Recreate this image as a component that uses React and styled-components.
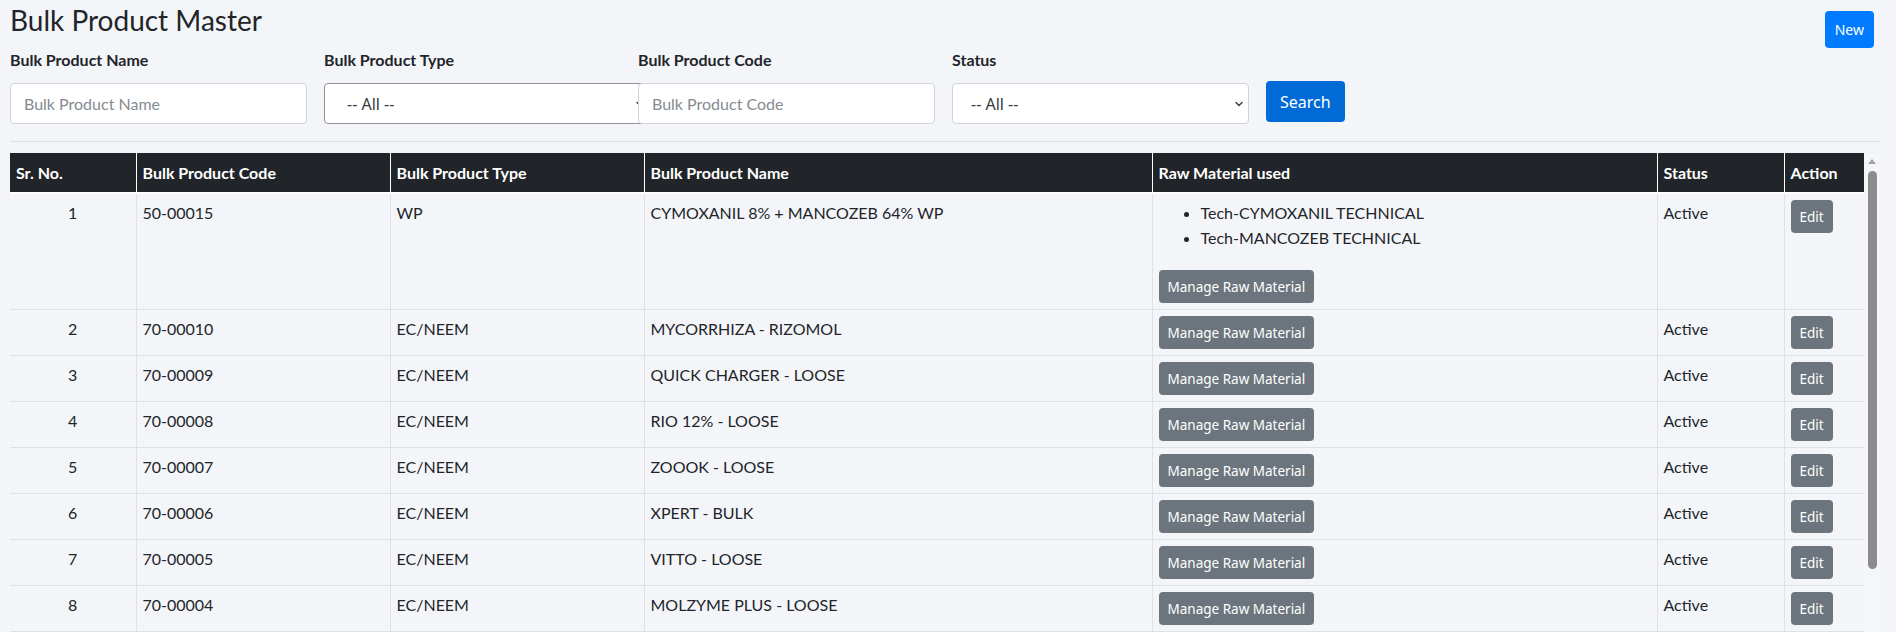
import React from "react";
import styled, { createGlobalStyle } from "styled-components";
import { ChevronDown } from "lucide-react";

const GlobalStyle = createGlobalStyle`
  * { box-sizing: border-box; }
  html, body {
    margin: 0;
    padding: 0;
    background: #f4f5f9;
  }
  body {
    font-family: Lato, "Liberation Sans", sans-serif;
    font-size: 16px;
    color: #212529;
  }
`;

const Page = styled.div`
  height: 100vh;
  display: flex;
  flex-direction: column;
  padding: 0 16px 0 10px;
  overflow: hidden;
`;

const TopBar = styled.div`
  display: flex;
  justify-content: space-between;
  align-items: flex-start;
  height: 48px;
`;

const Title = styled.h3`
  margin: 3px 0 0;
  font-size: 28px;
  line-height: 34px;
  font-weight: 400;
`;

const Button = styled.button`
  border: none;
  border-radius: 4px;
  color: #fff;
  font-family: "Noto Sans", "Open Sans", sans-serif;
  cursor: pointer;
  background: ${(p) => p.$bg || "#6c757d"};
  font-size: ${(p) => p.$size || "13.5px"};
  height: ${(p) => p.$h || "33px"};
  padding: 0 ${(p) => p.$px || "9px"};
  white-space: nowrap;
`;

const NewButton = styled(Button)`
  margin: 11px 6px 0 0;
`;

const Filters = styled.div`
  display: flex;
  align-items: flex-end;
  gap: 17px;
  padding-bottom: 17px;
`;

const Field = styled.div`
  width: 297px;
  display: flex;
  flex-direction: column;
`;

const Label = styled.label`
  font-weight: 700;
  font-size: 16px;
  line-height: 24px;
  margin-bottom: 11px;
`;

const Input = styled.input`
  position: relative;
  z-index: 1;
  height: 41px;
  width: 100%;
  border: 1px solid #ced4da;
  border-radius: 4px;
  background: #fff;
  padding: 0 13px;
  font-family: Lato, sans-serif;
  font-size: 16px;
  color: #495057;
  &::placeholder {
    color: #848b92;
  }
`;

const SelectWrap = styled.div`
  position: relative;
  width: ${(p) => (p.$wide ? "326px" : "100%")};
`;

const Select = styled.select`
  appearance: none;
  width: 100%;
  height: 41px;
  border: 1px solid ${(p) => (p.$dark ? "#8f9296" : "#ced4da")};
  border-radius: 4px;
  background: #fff;
  padding: 0 30px 0 ${(p) => (p.$dark ? "22px" : "18px")};
  font-family: "Noto Sans", "Open Sans", sans-serif;
  font-size: 16px;
  color: #343a40;
`;

const Chevron = styled(ChevronDown)`
  position: absolute;
  right: 4px;
  top: 15px;
  color: #444;
  pointer-events: none;
`;

const SearchButton = styled(Button)`
  margin-bottom: 2px;
`;

const Divider = styled.div`
  height: 1px;
  background: #dcdfe4;
  margin-bottom: 11px;
`;

const TableArea = styled.div`
  flex: 1;
  min-height: 0;
  display: flex;
`;

const TableClip = styled.div`
  flex: 1;
  min-width: 0;
  overflow: hidden;
`;

const Rail = styled.div`
  width: 16px;
  flex: none;
  background: #f5f6f9;
  display: flex;
  flex-direction: column;
  align-items: center;
`;

const RailArrow = styled.div`
  height: 16px;
  width: 100%;
  display: flex;
  align-items: center;
  justify-content: center;
  &::before {
    content: "";
    width: 0;
    height: 0;
    border-left: 4.5px solid transparent;
    border-right: 4.5px solid transparent;
    border-bottom: 5px solid #a3a3a3;
    margin-top: 1px;
  }
`;

const Thumb = styled.div`
  width: 9px;
  height: 398px;
  margin-top: 2px;
  border-radius: 5px;
  background: #8c8c8c;
`;

const Table = styled.table`
  width: 100%;
  table-layout: fixed;
  border-collapse: collapse;
`;

const Col = styled.col`
  width: ${(p) => p.$w}px;
`;

const Th = styled.th`
  background: #212529;
  color: #fff;
  font-weight: 700;
  font-size: 16px;
  text-align: left;
  height: 40px;
  padding: 0 6px;
  border-left: 1px solid #fff;
  border-bottom: 2px solid #fff;
  &:first-child {
    border-left: none;
  }
`;

const Td = styled.td`
  vertical-align: top;
  padding: 6px 6px;
  line-height: 26px;
  border: 1px solid #dee2e6;
  text-align: ${(p) => (p.$center ? "center" : "left")};
  &:first-child {
    border-left: none;
  }
`;

const RawList = styled.ul`
  margin: 0 0 20px;
  padding-left: 42px;
  line-height: 25px;
`;

const rows = [
  {
    code: "50-00015",
    type: "WP",
    name: "CYMOXANIL 8% + MANCOZEB 64% WP",
    raw: ["Tech-CYMOXANIL TECHNICAL", "Tech-MANCOZEB TECHNICAL"],
  },
  { code: "70-00010", type: "EC/NEEM", name: "MYCORRHIZA - RIZOMOL" },
  { code: "70-00009", type: "EC/NEEM", name: "QUICK CHARGER - LOOSE" },
  { code: "70-00008", type: "EC/NEEM", name: "RIO 12% - LOOSE" },
  { code: "70-00007", type: "EC/NEEM", name: "ZOOOK - LOOSE" },
  { code: "70-00006", type: "EC/NEEM", name: "XPERT - BULK" },
  { code: "70-00005", type: "EC/NEEM", name: "VITTO - LOOSE" },
  { code: "70-00004", type: "EC/NEEM", name: "MOLZYME PLUS - LOOSE" },
  { code: "70-00003", type: "EC/NEEM", name: "MOLZYME - LOOSE" },
];

const widths = [126, 254, 254, 508, 505, 127, 80];
const heads = [
  "Sr. No.",
  "Bulk Product Code",
  "Bulk Product Type",
  "Bulk Product Name",
  "Raw Material used",
  "Status",
  "Action",
];

export default function App() {
  return (
    <Page>
      <GlobalStyle />
      <TopBar>
        <Title>Bulk Product Master</Title>
        <NewButton $bg="#007bff" $h="37px" $px="10px" $size="14px">
          New
        </NewButton>
      </TopBar>

      <Filters>
        <Field>
          <Label>Bulk Product Name</Label>
          <Input placeholder="Bulk Product Name" />
        </Field>
        <Field>
          <Label>Bulk Product Type</Label>
          <SelectWrap $wide>
            <Select $dark defaultValue="">
              <option value="">-- All --</option>
            </Select>
            <Chevron size={12} strokeWidth={3} />
          </SelectWrap>
        </Field>
        <Field>
          <Label>Bulk Product Code</Label>
          <Input placeholder="Bulk Product Code" />
        </Field>
        <Field>
          <Label>Status</Label>
          <SelectWrap>
            <Select defaultValue="">
              <option value="">-- All --</option>
            </Select>
            <Chevron size={12} strokeWidth={3} />
          </SelectWrap>
        </Field>
        <SearchButton $bg="#006bd6" $h="41px" $size="16px" $px="14px">
          Search
        </SearchButton>
      </Filters>

      <Divider />

      <TableArea>
        <TableClip>
          <Table>
            <colgroup>
              {widths.map((w, i) => (
                <Col key={i} $w={w} />
              ))}
            </colgroup>
            <thead>
              <tr>
                {heads.map((h) => (
                  <Th key={h}>{h}</Th>
                ))}
              </tr>
            </thead>
            <tbody>
              {rows.map((r, i) => (
                <tr key={r.code}>
                  <Td $center>{i + 1}</Td>
                  <Td>{r.code}</Td>
                  <Td>{r.type}</Td>
                  <Td>{r.name}</Td>
                  <Td>
                    {r.raw && (
                      <RawList>
                        {r.raw.map((m) => (
                          <li key={m}>{m}</li>
                        ))}
                      </RawList>
                    )}
                    <Button>Manage Raw Material</Button>
                  </Td>
                  <Td>Active</Td>
                  <Td>
                    <Button>Edit</Button>
                  </Td>
                </tr>
              ))}
            </tbody>
          </Table>
        </TableClip>
        <Rail>
          <RailArrow />
          <Thumb />
        </Rail>
      </TableArea>
    </Page>
  );
}
